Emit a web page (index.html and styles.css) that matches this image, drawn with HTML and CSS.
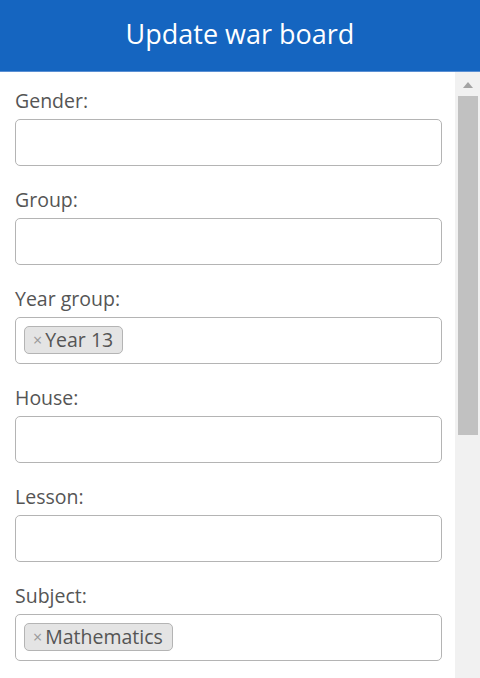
FILE: index.html
```html
<!DOCTYPE html>
<html lang="en">
<head>
<meta charset="utf-8">
<title>Update war board</title>
<link rel="stylesheet" href="styles.css">
</head>
<body>
<div class="dialog">
  <header class="header">
    <h1 class="title">Update war board</h1>
  </header>
  <div class="body">
    <form class="form">
      <div class="field">
        <label class="label">Gender:</label>
        <div class="select"></div>
      </div>
      <div class="field">
        <label class="label">Group:</label>
        <div class="select"></div>
      </div>
      <div class="field">
        <label class="label">Year group:</label>
        <div class="select"><span class="chip"><span class="chip-x">×</span>Year 13</span></div>
      </div>
      <div class="field">
        <label class="label">House:</label>
        <div class="select"></div>
      </div>
      <div class="field">
        <label class="label">Lesson:</label>
        <div class="select"></div>
      </div>
      <div class="field">
        <label class="label">Subject:</label>
        <div class="select"><span class="chip"><span class="chip-x">×</span>Mathematics</span></div>
      </div>
    </form>
    <div class="scrollbar">
      <div class="scroll-arrow"></div>
      <div class="scroll-thumb"></div>
    </div>
  </div>
</div>
</body>
</html>
```

FILE: styles.css
```css
* { box-sizing: border-box; }
html, body {
  margin: 0;
  padding: 0;
  width: 480px;
  height: 678px;
  overflow: hidden;
  background: #ffffff;
  font-family: "Open Sans", "Noto Sans", sans-serif;
}
.dialog {
  display: flex;
  flex-direction: column;
  height: 678px;
}
.header {
  height: 72px;
  flex: 0 0 72px;
  background: #1565c0;
  border-bottom: 1px solid #5a8fd3;
  display: flex;
  align-items: center;
  justify-content: center;
}
.title {
  margin: 0;
  color: #ffffff;
  font-weight: 400;
  font-size: 27px;
  line-height: 38px;
  padding-bottom: 3px;
}
.body {
  flex: 1;
  display: flex;
  overflow: hidden;
}
.form {
  width: 455px;
  flex: 0 0 455px;
  padding: 15px 13px 0 15px;
}
.field {
  display: flex;
  flex-direction: column;
  margin-bottom: 20px;
}
.label {
  color: #555555;
  font-size: 19.5px;
  line-height: 27px;
  margin-bottom: 5px;
}
.select {
  height: 47px;
  border: 1.5px solid #b4b4b4;
  border-radius: 5px;
  background: #fff;
  display: flex;
  align-items: flex-start;
  padding: 8px 8px;
}
.chip {
  display: inline-flex;
  align-items: center;
  height: 28px;
  padding: 0 9px 0 8px;
  background: #e4e4e4;
  border: 1.5px solid #b4b4b4;
  border-radius: 5px;
  color: #555555;
  font-size: 19.5px;
  line-height: 24px;
}
.chip-x {
  color: #999;
  font-size: 16px;
  margin-right: 3px;
}
.scrollbar {
  flex: 1;
  background: #f1f1f1;
  display: flex;
  flex-direction: column;
  align-items: center;
  padding-top: 10px;
}
.scroll-arrow {
  width: 0;
  height: 0;
  border-left: 5px solid transparent;
  border-right: 5px solid transparent;
  border-bottom: 6px solid #a3a3a3;
}
.scroll-thumb {
  margin-top: 8px;
  width: 20px;
  height: 339px;
  background: #c1c1c1;
}
```
